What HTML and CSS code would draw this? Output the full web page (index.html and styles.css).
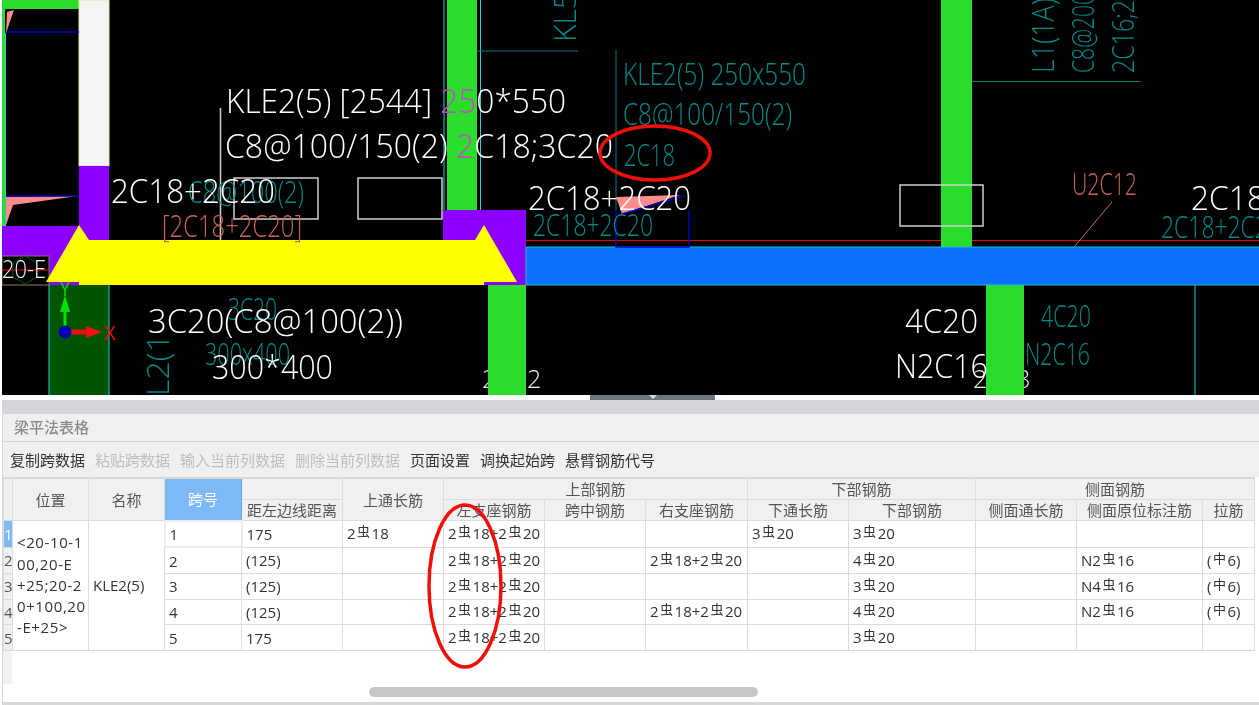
FILE: index.html
```html
<!DOCTYPE html>
<html lang="zh-CN">
<head>
    <meta charset="UTF-8">
    <meta name="viewport" content="width=device-width, initial-scale=1.0">
    <title>梁平法表格</title>
    <link rel="stylesheet" href="styles.css">
</head>
<body>
    <svg class="cad" viewBox="0 0 1257 395" width="1257" height="395">
        <g transform="translate(-2 0)">
            <!-- axis numbers sit behind the columns -->
            <g class="t-white-sm">
                <text x="482" y="388">2</text>
                <text x="527" y="388">2</text>
                <text x="973" y="388">2</text>
                <text x="1016" y="388">8</text>
            </g>

            <!-- wall and column fills -->
            <rect class="col-green" x="2" y="0" width="92" height="9"/>
            <rect class="col-green" x="2" y="0" width="3" height="226"/>
            <rect class="col-white" x="79" y="0" width="30" height="166"/>
            <rect class="col-purple" x="79" y="166" width="30" height="75"/>
            <rect class="col-purple" x="2" y="226" width="78" height="59"/>
            <rect class="col-green" x="447" y="0" width="30" height="211"/>
            <rect class="col-purple" x="443" y="210" width="83" height="75"/>
            <rect class="col-green" x="941" y="0" width="31" height="248"/>
            <rect class="col-dark" x="49" y="285" width="60" height="111"/>
            <rect class="col-green" x="488" y="285" width="38" height="111"/>
            <rect class="col-green" x="986" y="285" width="38" height="111"/>
            <rect class="beam-blue" x="526" y="247" width="735" height="38"/>
            <rect class="axis-box" x="2" y="256" width="47" height="29"/>
            <polygon class="beam-yellow" points="46,282 79,225 89,240 475,240 484,225 517,282 484,282 484,285 79,285 79,282"/>

            <!-- thin lines -->
            <line class="ln-cyan" x1="444" y1="0" x2="444" y2="210"/>
            <line class="ln-cyan" x1="480.500" y1="0" x2="480.500" y2="210"/>
            <line class="ln-cyan" x1="1195" y1="285" x2="1195" y2="396"/>
            <line class="ln-cyan" x1="5.500" y1="33" x2="5.500" y2="226"/>
            <line class="ln-cyan" x1="49" y1="285" x2="49" y2="396"/>
            <line class="ln-cyan" x1="109" y1="285" x2="109" y2="396"/>
            <line class="ln-teal" x1="477" y1="51" x2="578" y2="51"/>
            <line class="ln-teal" x1="616" y1="50" x2="616" y2="210"/>
            <line class="ln-teal" x1="972" y1="81.500" x2="1141" y2="81.500"/>
            <line class="ln-red" x1="526" y1="240.500" x2="941" y2="240.500"/>
            <line class="ln-red" x1="972" y1="240.500" x2="1259" y2="240.500"/>
            <line class="ln-red" x1="2" y1="270" x2="48" y2="270"/>
            <line class="ln-blue" x1="5" y1="32" x2="79" y2="32"/>
            <path class="ln-blue" d="M616 210V247H689V210"/>
            <line class="ln-salmon" x1="1112" y1="202" x2="1074" y2="247"/>
            <line class="ln-white" x1="220.500" y1="108" x2="220.500" y2="240"/>
            <rect class="box-white" x="234" y="178" width="84" height="41"/>
            <rect class="box-white" x="358" y="178" width="84" height="41"/>
            <rect class="box-white" x="900" y="185" width="83" height="41"/>

            <!-- rebar marks -->
            <polygon class="mark" points="6,33 14,10 7,12"/>
            <polygon class="mark" points="6,197 78,196 13,205 6,225"/>
            <polygon class="mark" points="616,197 680,195 622,214"/>
            <line class="ln-blue" x1="6" y1="196" x2="78" y2="196"/>
            <line class="ln-blue" x1="622" y1="214" x2="684" y2="196"/>

            <!-- axis -->
            <polygon class="hex" points="25,256 37,263 37,277 25,284 13,277 13,263"/>
            <line class="axis-y" x1="65" y1="332" x2="65" y2="305"/>
            <polygon class="axis-y-head" points="65,295 60,312 70,312"/>
            <line class="axis-x" x1="65" y1="332" x2="90" y2="332"/>
            <polygon class="axis-x-head" points="102,332 86,326 86,338"/>
            <circle class="axis-o" cx="65" cy="332" r="6.500"/>
            <text class="t-axis-y" x="60" y="296" textLength="10" lengthAdjust="spacingAndGlyphs">Y</text>
            <text class="t-axis-x" x="104" y="340" textLength="12" lengthAdjust="spacingAndGlyphs">X</text>

            <!-- teal drawing labels -->
            <g class="t-teal">
                <text x="623" y="85" textLength="183" lengthAdjust="spacingAndGlyphs">KLE2(5) 250x550</text>
                <text x="623" y="125" textLength="169" lengthAdjust="spacingAndGlyphs">C8@100/150(2)</text>
                <text x="624" y="166" textLength="51" lengthAdjust="spacingAndGlyphs">2C18</text>
                <text x="533" y="236" textLength="120" lengthAdjust="spacingAndGlyphs">2C18+2C20</text>
                <text x="1161" y="238" textLength="120" lengthAdjust="spacingAndGlyphs">2C18+2C20</text>
                <text x="188" y="203" textLength="116" lengthAdjust="spacingAndGlyphs">C8@100(2)</text>
                <text x="228" y="320" textLength="49" lengthAdjust="spacingAndGlyphs">3C20</text>
                <text x="205" y="365" textLength="85" lengthAdjust="spacingAndGlyphs">300x400</text>
                <text x="1041" y="327" textLength="50" lengthAdjust="spacingAndGlyphs">4C20</text>
                <text x="1025" y="365" textLength="65" lengthAdjust="spacingAndGlyphs">N2C16</text>
                <text transform="translate(576 42) rotate(-90)" textLength="50" lengthAdjust="spacingAndGlyphs">KL5</text>
                <text transform="translate(1054 73) rotate(-90)" textLength="75" lengthAdjust="spacingAndGlyphs">L1(1A)</text>
                <text transform="translate(1094 73) rotate(-90)" textLength="80" lengthAdjust="spacingAndGlyphs">C8@200</text>
                <text transform="translate(1134 73) rotate(-90)" textLength="73" lengthAdjust="spacingAndGlyphs">2C16;2</text>
                <text transform="translate(169 396) rotate(-90)" textLength="62" lengthAdjust="spacingAndGlyphs">L2(1</text>
            </g>

            <!-- salmon labels -->
            <g class="t-salmon">
                <text x="162" y="237" textLength="140" lengthAdjust="spacingAndGlyphs">[2C18+2C20]</text>
                <text x="1072" y="195" textLength="65" lengthAdjust="spacingAndGlyphs">U2C12</text>
            </g>

            <!-- white labels -->
            <g class="t-white">
                <text x="226" y="113" textLength="340" lengthAdjust="spacingAndGlyphs">KLE2(5) [2544] <tspan class="t-magenta">25</tspan>0*550</text>
                <text x="225" y="158" textLength="388" lengthAdjust="spacingAndGlyphs">C8@100/150(2) <tspan class="t-magenta">2</tspan>C18;3C20</text>
                <text x="111" y="203" textLength="164" lengthAdjust="spacingAndGlyphs">2C18+2C20</text>
                <text x="528" y="210" textLength="163" lengthAdjust="spacingAndGlyphs">2C18+2C20</text>
                <text x="1191" y="210" textLength="74" lengthAdjust="spacingAndGlyphs">2C18</text>
                <text x="148" y="333" textLength="255" lengthAdjust="spacingAndGlyphs">3C20(C8@100(2))</text>
                <text x="212" y="379" textLength="121" lengthAdjust="spacingAndGlyphs">300*400</text>
                <text x="905" y="333" textLength="73" lengthAdjust="spacingAndGlyphs">4C20</text>
                <text x="895" y="378" textLength="93" lengthAdjust="spacingAndGlyphs">N2C16</text>
            </g>
            <g class="t-white-sm">
                <text x="2" y="278" textLength="44" lengthAdjust="spacingAndGlyphs">20-E</text>
            </g>
        </g>
    </svg>

    <div class="splitter"><div class="handle"><span class="handle-arrow"></span></div></div>

    <div class="panel">
        <div class="panel-strip"></div>
        <div class="panel-title">梁平法表格</div>
        <div class="toolbar">
            <span>复制跨数据</span>
            <span class="off">粘贴跨数据</span>
            <span class="off">输入当前列数据</span>
            <span class="off">删除当前列数据</span>
            <span>页面设置</span>
            <span>调换起始跨</span>
            <span>悬臂钢筋代号</span>
        </div>

        <table class="beam-table">
            <colgroup>
                <col class="c-no"><col class="c-pos"><col class="c-name"><col class="c-span"><col class="c-dist">
                <col class="c-w101"><col class="c-w101"><col class="c-w101"><col class="c-w102"><col class="c-w101">
                <col class="c-w127"><col class="c-w101"><col class="c-w126"><col class="c-last">
            </colgroup>
            <thead>
                <tr class="head-top">
                    <th rowspan="2"></th>
                    <th rowspan="2">位置</th>
                    <th rowspan="2">名称</th>
                    <th rowspan="2" class="picked">跨号</th>
                    <th></th>
                    <th rowspan="2">上通长筋</th>
                    <th colspan="3">上部钢筋</th>
                    <th colspan="2">下部钢筋</th>
                    <th colspan="3">侧面钢筋</th>
                </tr>
                <tr class="head-sub">
                    <th>距左边线距离</th>
                    <th>左支座钢筋</th>
                    <th>跨中钢筋</th>
                    <th>右支座钢筋</th>
                    <th>下通长筋</th>
                    <th>下部钢筋</th>
                    <th>侧面通长筋</th>
                    <th>侧面原位标注筋</th>
                    <th>拉筋</th>
                </tr>
            </thead>
            <tbody>
                <tr>
                    <td class="no no-on">1</td>
                    <td rowspan="5" class="pos">&lt;20-10-1<br>00,20-E<br>+25;20-2<br>0+100,20<br>-E+25&gt;</td>
                    <td rowspan="5">KLE2(5)</td>
                    <td class="cur">1</td>
                    <td>175</td>
                    <td>2<i>虫</i>18</td>
                    <td>2<i>虫</i>18+2<i>虫</i>20</td>
                    <td></td>
                    <td></td>
                    <td>3<i>虫</i>20</td>
                    <td>3<i>虫</i>20</td>
                    <td></td>
                    <td></td>
                    <td></td>
                </tr>
                <tr>
                    <td class="no">2</td>
                    <td>2</td>
                    <td>(125)</td>
                    <td></td>
                    <td>2<i>虫</i>18+2<i>虫</i>20</td>
                    <td></td>
                    <td>2<i>虫</i>18+2<i>虫</i>20</td>
                    <td></td>
                    <td>4<i>虫</i>20</td>
                    <td></td>
                    <td>N2<i>虫</i>16</td>
                    <td>(<i>中</i>6)</td>
                </tr>
                <tr>
                    <td class="no">3</td>
                    <td>3</td>
                    <td>(125)</td>
                    <td></td>
                    <td>2<i>虫</i>18+2<i>虫</i>20</td>
                    <td></td>
                    <td></td>
                    <td></td>
                    <td>3<i>虫</i>20</td>
                    <td></td>
                    <td>N4<i>虫</i>16</td>
                    <td>(<i>中</i>6)</td>
                </tr>
                <tr>
                    <td class="no">4</td>
                    <td>4</td>
                    <td>(125)</td>
                    <td></td>
                    <td>2<i>虫</i>18+2<i>虫</i>20</td>
                    <td></td>
                    <td>2<i>虫</i>18+2<i>虫</i>20</td>
                    <td></td>
                    <td>4<i>虫</i>20</td>
                    <td></td>
                    <td>N2<i>虫</i>16</td>
                    <td>(<i>中</i>6)</td>
                </tr>
                <tr>
                    <td class="no">5</td>
                    <td>5</td>
                    <td>175</td>
                    <td></td>
                    <td>2<i>虫</i>18+2<i>虫</i>20</td>
                    <td></td>
                    <td></td>
                    <td></td>
                    <td>3<i>虫</i>20</td>
                    <td></td>
                    <td></td>
                    <td></td>
                </tr>
            </tbody>
        </table>
        <div class="row-strip"></div>
        <div class="hscroll"></div>
    </div>

    <!-- hand drawn red circles over the screenshot -->
    <svg class="marks" viewBox="0 0 1259 705" width="1259" height="705">
        <ellipse cx="655" cy="153" rx="55" ry="27"/>
        <ellipse cx="465" cy="586" rx="36" ry="81"/>
    </svg>
</body>
</html>
```

FILE: styles.css
```css
html, body {
    margin: 0;
    padding: 0;
}
body {
    position: relative;
    width: 1259px;
    height: 705px;
    overflow: hidden;
    background: #fff;
    font-family: "Open Sans", "Noto Sans CJK SC", sans-serif;
    color: #333;
}

/* drawing */
.cad {
    display: block;
    margin-left: 2px;
    background: #000;
    filter: blur(.35px);
}
.col-green { fill: #2bdd2b; }
.col-white { fill: #f5f5f5; stroke: #e8e8a0; stroke-width: 1; }
.col-purple { fill: #8b00ff; }
.col-dark { fill: #005500; }
.beam-blue { fill: #0f6fff; stroke: #19c0d8; stroke-width: 1; }
.beam-yellow { fill: #ffff00; }
.axis-box { fill: #000; stroke: #8a7a5a; stroke-width: 1; }
.ln-cyan { stroke: #1fd0d8; stroke-width: 1; }
.ln-teal { stroke: #007d7d; stroke-width: 1; }
.ln-red { stroke: #f00000; stroke-width: 1; }
.ln-blue { stroke: #0000c0; stroke-width: 1.5; fill: none; }
.ln-salmon { stroke: #c46a60; stroke-width: 1; }
.ln-white { stroke: #d0d0d0; stroke-width: 1.5; }
.box-white { fill: none; stroke: #d0d0d0; stroke-width: 1.5; }
.mark { fill: #ff8a8a; }
.hex { fill: none; stroke: #006000; stroke-width: 1; }
.axis-y { stroke: #00e000; stroke-width: 3; }
.axis-y-head { fill: #00e000; }
.axis-x { stroke: #f01010; stroke-width: 5; }
.axis-x-head { fill: #f01010; }
.axis-o { fill: #0000b0; }
.t-axis-y, .t-axis-x {
    font-family: "Liberation Sans", sans-serif;
    font-size: 20px;
}
.t-axis-y { fill: #00e000; }
.t-axis-x { fill: #f01010; }
.t-teal text {
    font-family: "Open Sans", sans-serif;
    font-size: 32px;
    font-weight: 300;
    fill: #008a8a;
}
.t-salmon text {
    font-family: "Open Sans", sans-serif;
    font-size: 31px;
    font-weight: 300;
    fill: #c8645a;
}
.t-white text {
    font-family: "Open Sans", sans-serif;
    font-size: 33px;
    font-weight: 300;
    fill: #fff;
}
.t-white .t-magenta { fill: #d040d0; }
.t-white-sm text {
    font-family: "Open Sans", sans-serif;
    font-size: 25px;
    font-weight: 300;
    fill: #f2f2f2;
}

/* splitter between drawing and table */
.splitter {
    height: 5px;
    display: flex;
}
.handle {
    width: 125px;
    height: 5px;
    margin-left: 590px;
    background: #6d7680;
    display: flex;
    justify-content: center;
}
.handle-arrow {
    width: 0;
    height: 0;
    border-left: 4px solid transparent;
    border-right: 4px solid transparent;
    border-top: 4px solid #d8dadd;
}

/* panel */
.panel {
    margin-left: 2px;
    height: 305px;
    box-sizing: border-box;
    border-left: 1px solid #d6d6d6;
    border-bottom: 3px solid #d8d8d8;
}
.panel-strip {
    height: 14px;
    background: #d3d4d8;
}
.panel-title {
    height: 27px;
    padding-left: 11px;
    background: #f0f0f0;
    border-bottom: 1px solid #d4d4d4;
    font-size: 15px;
    line-height: 27px;
    font-weight: 500;
    color: #8a8a8a;
    filter: blur(.35px);
}
.toolbar {
    height: 35px;
    padding-left: 7px;
    display: flex;
    gap: 10px;
    align-items: center;
    background: #f0f0f0;
    font-size: 15px;
    color: #333;
    filter: blur(.35px);
}
.toolbar .off { color: #bdbdbd; }

/* table */
.beam-table {
    table-layout: fixed;
    border-collapse: collapse;
    width: 1252px;
    font-size: 15px;
    border-top: 2px solid #d8d8d8;
    filter: blur(.35px);
}
.c-no { width: 9px; }
.c-pos { width: 76px; }
.c-name { width: 76px; }
.c-span { width: 77px; }
.c-dist { width: 101px; }
.c-w101 { width: 101px; }
.c-w102 { width: 102px; }
.c-w127 { width: 127px; }
.c-w126 { width: 126px; }
.c-last { width: 52px; }
.beam-table th, .beam-table td {
    border: 1.5px solid #dcdcdc;
    padding: 0;
    overflow: hidden;
    white-space: nowrap;
    line-height: 20px;
}
.beam-table th {
    background: #f0f0f0;
    font-weight: 400;
    font-size: 15px;
    color: #555;
    text-align: center;
}
.head-top th { height: 20px; }
.head-sub th { height: 20px; }
.beam-table th.picked {
    background: #7eb9f8;
    border-color: #6ba6e8;
    color: #fff;
}
.beam-table td {
    height: 24.700px;
    padding-left: 4px;
    color: #333;
    background: #fff;
}
.beam-table td i {
    font-style: normal;
    font-size: 13px;
    position: relative;
    top: -3px;
    margin: 0 1.500px;
}
.beam-table td.no {
    padding: 0;
    overflow: visible;
    background: #f0f0f0;
    color: #555;
    text-align: left;
    font-size: 15px;
}
.beam-table td.no-on {
    background: #7eb9f8;
    color: #fff;
}
.beam-table td.cur {
    border: 2px solid #ececec;
}
.beam-table td.pos {
    line-height: 21.200px;
    padding-left: 4px;
    letter-spacing: .6px;
}
.row-strip {
    width: 9px;
    height: 33px;
    background: #f2f2f2;
}
.hscroll {
    width: 389px;
    height: 10px;
    margin: 3px 0 0 366px;
    border-radius: 5px;
    background: #c8c8c8;
}

/* red markup */
.marks {
    position: absolute;
    left: 0;
    top: 0;
    pointer-events: none;
}
.marks ellipse {
    fill: none;
    stroke: #f01008;
    stroke-width: 3.500px;
}
```
